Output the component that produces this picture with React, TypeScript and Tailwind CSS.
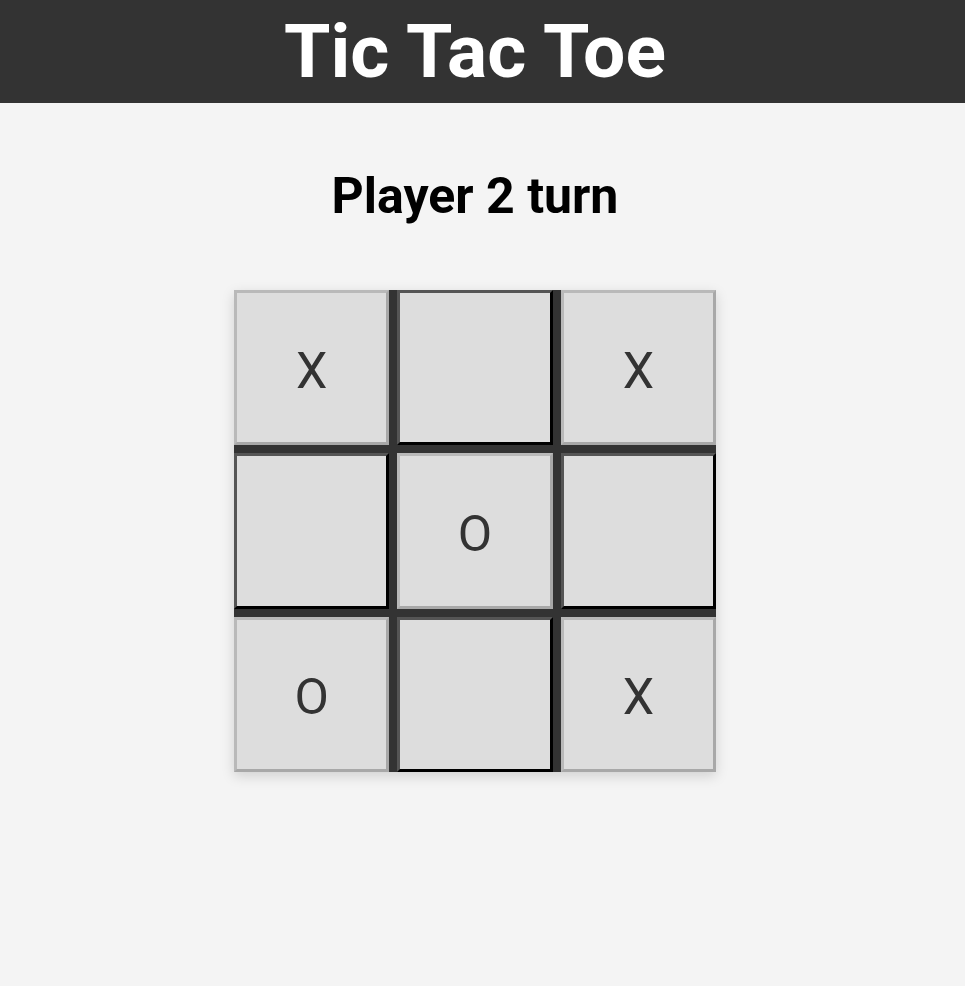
import React from 'react'

type Mark = 'X' | 'O' | null

const board: Mark[] = ['X', null, 'X', null, 'O', null, 'O', null, 'X']

function Cell({ value }: { value: Mark }) {
  const filled = value !== null
  return (
    <button
      className={
        filled
          ? 'flex items-center justify-center border-[3px] border-t-[#b9b9b9] border-l-[#b9b9b9] border-r-[#a8a8a8] border-b-[#a8a8a8] bg-[#dddddd] pt-[6px] text-[50px] leading-none text-[#333333]'
          : 'flex items-center justify-center border-[3px] border-t-[#555555] border-l-[#555555] border-r-black border-b-black bg-[#dddddd] text-[50px] leading-none text-[#333333]'
      }
    >
      {value}
    </button>
  )
}

export default function App() {
  return (
    <div className="min-h-[986px] bg-[#f4f4f4] font-['Roboto',sans-serif]">
      <header className="flex h-[103px] items-center justify-center bg-[#333333] pr-[15px]">
        <h1 className="text-[75px] font-bold leading-none text-white">Tic Tac Toe</h1>
      </header>
      <main className="flex flex-col items-center pr-[15px]">
        <h2 className="mt-[68px] text-[50px] font-bold leading-none text-black">Player 2 turn</h2>
        <div className="mt-[69px] grid h-[482px] w-[482px] grid-cols-3 grid-rows-3 gap-2 bg-[#333333] shadow-[0_4px_12px_rgba(0,0,0,0.15)]">
          {board.map((v, i) => (
            <Cell key={i} value={v} />
          ))}
        </div>
      </main>
    </div>
  )
}
